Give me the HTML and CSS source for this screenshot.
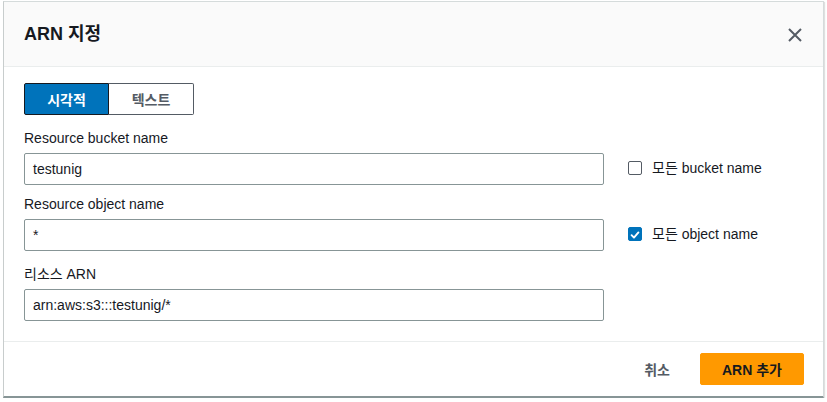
FILE: index.html
```html
<!DOCTYPE html>
<html lang="ko">
<head>
<meta charset="utf-8">
<link rel="stylesheet" href="styles.css">
</head>
<body>
<div class="modal">
  <header class="modal-header">
    <h2 class="title">ARN 지정</h2>
    <button class="close" aria-label="닫기">
      <svg width="16" height="16" viewBox="0 0 16 16"><path d="M2 2 L14 14 M14 2 L2 14" stroke="#545b64" stroke-width="2" fill="none"/></svg>
    </button>
  </header>
  <div class="modal-body">
    <div class="segmented">
      <button class="seg seg-active">시각적</button>
      <button class="seg">텍스트</button>
    </div>
    <div class="fields">
      <div class="field-row">
        <div class="field">
          <label class="label">Resource bucket name</label>
          <div class="input">testunig</div>
        </div>
        <div class="check">
          <span class="box"></span>
          <span class="check-label">모든 bucket name</span>
        </div>
      </div>
      <div class="field-row">
        <div class="field">
          <label class="label">Resource object name</label>
          <div class="input">*</div>
        </div>
        <div class="check">
          <span class="box box-checked"><svg width="14" height="14" viewBox="0 0 14 14"><path d="M3 7.2 L5.8 10 L11 4" stroke="#fff" stroke-width="2.2" fill="none" stroke-linecap="round" stroke-linejoin="round"/></svg></span>
          <span class="check-label">모든 object name</span>
        </div>
      </div>
      <div class="field-row field-row-last">
        <div class="field">
          <label class="label">리소스 ARN</label>
          <div class="input">arn:aws:s3:::testunig/*</div>
        </div>
      </div>
    </div>
  </div>
  <footer class="modal-footer">
    <button class="link-btn">취소</button>
    <button class="primary">ARN 추가</button>
  </footer>
</div>
</body>
</html>
```
FILE: styles.css
```css
* { box-sizing: border-box; }
html, body { margin: 0; padding: 0; background: #fff; }
body {
  font-family: "Liberation Sans", "Noto Sans CJK KR", sans-serif;
  font-size: 14px;
  color: #16191f;
  padding: 1px 3px 0 3px;
}
.modal {
  width: 821px;
  height: 397px;
  border: 1px solid #d5dbdb;
  border-left-color: #c8cdcd;
  border-bottom: 2px solid #879596;
  box-shadow: 1px 1px 1px rgba(0,0,0,0.12);
  display: flex;
  flex-direction: column;
  background: #fff;
}
.modal-header {
  height: 65px;
  background: #fafafa;
  border-bottom: 1px solid #eaeded;
  display: flex;
  align-items: center;
  justify-content: space-between;
  padding: 0 16px 0 20px;
}
.title {
  margin: 0;
  font-size: 18px;
  font-weight: 700;
  line-height: 22px;
  color: #16191f;
}
.close {
  border: 0;
  background: transparent;
  padding: 4px;
  display: flex;
  margin-top: 2px;
}
.modal-body {
  padding: 16px 20px 20px 20px;
  border-bottom: 1px solid #eaeded;
}
.segmented {
  display: flex;
  height: 32px;
}
.seg {
  font-family: inherit;
  font-size: 14px;
  font-weight: 700;
  border: 1px solid #545b64;
  background: #fff;
  color: #545b64;
  height: 32px;
  padding: 0;
  width: 85px;
  border-radius: 0 2px 2px 0;
  border-left: 0;
}
.seg-active {
  width: 85px;
  background: #0073bb;
  color: #fff;
  border: 1px solid #16191f;
  border-radius: 2px 0 0 2px;
}
.fields {
  margin-top: 12px;
  display: flex;
  flex-direction: column;
  gap: 12px;
}
.field-row {
  display: flex;
  align-items: flex-end;
  gap: 24px;
}
.field-row + .field-row { margin-top: -4px; }
.field-row-last { margin-top: 0 !important; }
.field {
  width: 580px;
  display: flex;
  flex-direction: column;
  gap: 4px;
}
.label {
  font-size: 14px;
  line-height: 22px;
  color: #16191f;
}
.input {
  height: 32px;
  border: 1px solid #879596;
  border-radius: 2px;
  padding: 0 8px;
  line-height: 30px;
  font-size: 14px;
  color: #16191f;
}
.check {
  height: 32px;
  display: flex;
  align-items: center;
  gap: 10px;
  margin-bottom: 2px;
}
.box {
  width: 14px;
  height: 14px;
  border: 1px solid #545b64;
  border-radius: 2px;
  display: flex;
  margin-top: 2px;
}
.box-checked {
  background: #0073bb;
  border-color: #0073bb;
}
.check-label {
  font-size: 14px;
  color: #16191f;
}
.modal-footer {
  flex: 1;
  display: flex;
  justify-content: flex-end;
  align-items: center;
  gap: 30px;
  padding: 0 19px 0 20px;
}
.link-btn {
  font-family: inherit;
  font-size: 14px;
  font-weight: 700;
  color: #545b64;
  border: 0;
  background: transparent;
  padding: 0;
}
.primary {
  font-family: inherit;
  font-size: 14px;
  font-weight: 700;
  color: #16191f;
  background: #ff9900;
  border: 1px solid #ff9900;
  border-radius: 2px;
  height: 32px;
  width: 104px;
  padding: 0;
}
```
